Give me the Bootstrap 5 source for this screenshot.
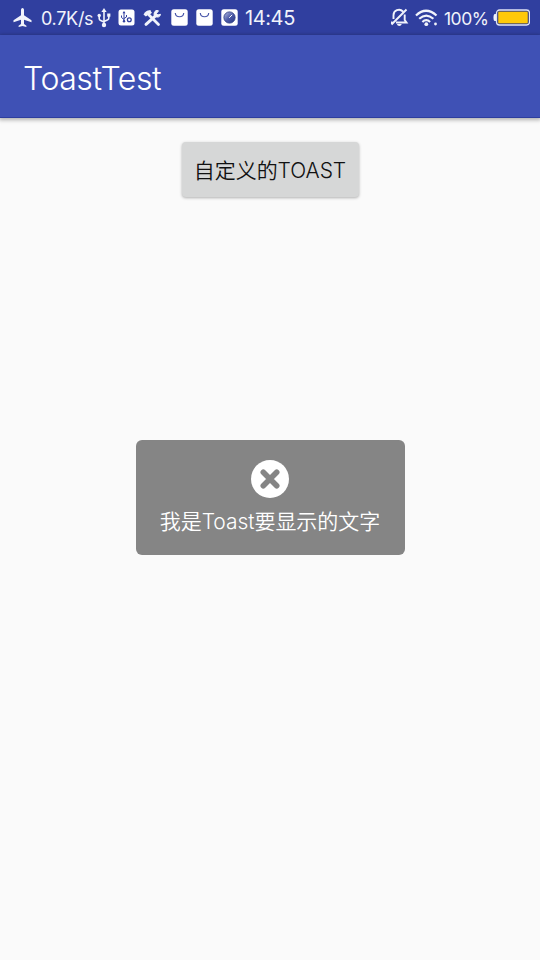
<!DOCTYPE html>
<html lang="zh-CN">
<head>
<meta charset="utf-8">
<meta name="viewport" content="width=device-width, initial-scale=1">
<title>ToastTest</title>
<link href="https://cdn.jsdelivr.net/npm/bootstrap@5.3.0/dist/css/bootstrap.min.css" rel="stylesheet">
<style>
  body { background: #fafafa; font-family: Inter, "Noto Sans CJK SC", sans-serif; }
  .status-bar { height: 35px; background: #303f9f; color: #f1f3fb; padding: 0 10px 0 13px; line-height: 35px; }
  .status-bar svg { display: block; flex: none; }
  .status-bar span { white-space: nowrap; flex: none; padding-top: 2px; }
  .status-bar .speed { width: 56px; margin-left: 8px; padding-left: 1px; font-size: 18px; letter-spacing: -.3px; }
  .status-bar .clock { margin-left: 7px; font-size: 20px; letter-spacing: -.4px; }
  .status-bar .level { width: 49px; margin-left: 5px; font-size: 17.5px; letter-spacing: -.5px; }
  .app-bar { height: 83px; background: #3f51b5; padding: 4px 23px 0; box-shadow: inset 0 -1px 0 #2d3e9e, 0 1px 4px 1px rgba(0,0,0,.3); }
  .app-title { color: #fff; font-size: 32px; font-weight: 300; line-height: 1; letter-spacing: -.45px; }
  .btn-toast { width: 177px; height: 55px; margin-top: 24px; padding: 2px 0 0; border: 0; border-radius: 4px; background: #d6d7d7; color: #111; font-size: 21px; font-weight: 350; line-height: 1; letter-spacing: -.05px; box-shadow: 0 1px 3px rgba(0,0,0,.3); white-space: nowrap; }
  .toast-box { width: 269px; height: 115px; margin-top: 243px; padding-top: 20px; border-radius: 6px; background: #858585; color: #fff; }
  .toast-text { margin-top: 9px; font-size: 21px; font-weight: 350; line-height: 30px; letter-spacing: -.05px; white-space: nowrap; }
</style>
</head>
<body>
<div class="status-bar d-flex align-items-center">
  <svg width="19" height="20" viewBox="0 0 19 20" fill="#f1f3fb"><path d="M9.500 0c1 0 1.500 1 1.500 2.200v5l7.500 5v2l-7.500-2.500v4.300l2.400 1.800v1.300l-3.900-1-3.900 1v-1.300L8 16v-4.300L.5 14.200v-2l7.500-5v-5C8 1 8.500 0 9.500 0z"/></svg>
  <span class="speed">0.7K/s</span>
  <svg style="margin-left:1px" width="14" height="20" viewBox="0 0 14 20" fill="none" stroke="#f1f3fb" stroke-width="1.600"><path d="M7 3v13M2.200 8v2.500q0 1.500 1.500 2L7 14M11.800 7.500V10q0 1.500-1.500 2L7 13.500"/><path d="M7 0l2.600 4H4.400z" fill="#f1f3fb" stroke="none"/><circle cx="7" cy="17" r="2.200" fill="#f1f3fb" stroke="none"/><circle cx="2.200" cy="7.500" r="1.700" fill="#f1f3fb" stroke="none"/><path d="M10.200 5.500h3.200v3.200h-3.200z" fill="#f1f3fb" stroke="none"/></svg>
  <svg style="margin-left:7px" width="17" height="17" viewBox="0 0 17 17"><rect x=".5" y=".5" width="16" height="16" rx="2.500" fill="#fff"/><g fill="none" stroke="#303f9f"><path d="M6 3.500v8.500M3.500 6.500v2L6 10.500M8.500 6v2L6 9.500"/><circle cx="11.300" cy="10.800" r="1.900" stroke-width="1.300"/></g><circle cx="6" cy="12.300" r="1.200" fill="#303f9f"/><path d="M6 2l1.500 2.300h-3z" fill="#303f9f"/></svg>
  <svg style="margin-left:8px" width="19" height="18" viewBox="0 0 19 18" fill="none" stroke="#f1f3fb"><path d="M6 6l9.500 9.500" stroke-width="2.800" stroke-linecap="round"/><path d="M.5 5.500q3-5 7.500-4L4.500 6.500 2.800 7.500z" fill="#f1f3fb" stroke="none"/><path d="M4.500 5.500L8 2.500" stroke-width="3"/><path d="M3 15.300L12.500 6.800" stroke-width="3" stroke-linecap="round"/><path d="M15.500 1.800a3.200 3.200 0 1 0 2 3.500L14.800 6 13.500 4.500z" fill="#f1f3fb" stroke-width="1"/></svg>
  <svg style="margin-left:9px" width="17" height="17" viewBox="0 0 17 17"><rect x=".3" y=".3" width="16.400" height="16.400" rx="2.500" fill="#fff"/><path d="M4.300 4c.4 5 8 5 8.400 0" fill="none" stroke="#4a58aa" stroke-width="1.200"/></svg>
  <svg style="margin-left:8px" width="17" height="17" viewBox="0 0 17 17"><rect x=".3" y=".3" width="16.400" height="16.400" rx="2.500" fill="#fff"/><path d="M4.300 4c.4 5 8 5 8.400 0" fill="none" stroke="#4a58aa" stroke-width="1.200"/></svg>
  <svg style="margin-left:8px" width="17" height="17" viewBox="0 0 17 17"><defs><linearGradient id="lens" x1="0" y1="0" x2="1" y2="1"><stop offset="0" stop-color="#b8c0e4"/><stop offset=".5" stop-color="#4d5ba8"/><stop offset="1" stop-color="#263582"/></linearGradient></defs><rect x=".3" y=".3" width="16.400" height="16.400" rx="2.500" fill="#fff"/><circle cx="8.500" cy="8.500" r="5.600" fill="url(#lens)" stroke="#303f87" stroke-width=".9"/><path d="M8.200 8.800l3-3" stroke="#fff" stroke-width="1"/></svg>
  <span class="clock">14:45</span>
  <svg class="ms-auto" width="19" height="19" viewBox="0 0 19 19" fill="none" stroke="#f1f3fb" stroke-width="1.900"><path d="M3.500 11V7.500a5.500 5.500 0 0 1 9.500-4M14.700 6.500V12l1.800 2.500H6M1.500 16.500L16.500 1.500M1 14.500h1.500"/><path d="M6.800 16h5q-.7 2-2.500 2t-2.500-2z" fill="#f1f3fb" stroke="none"/></svg>
  <svg style="margin-left:6px" width="24" height="18" viewBox="0 0 24 18" fill="none" stroke="#f1f3fb" stroke-width="2.200"><path d="M1 6.500q10-9.500 20.500 0M4.200 9.800q7-6.500 14.200 0M7.400 13q3.800-3.600 7.700 0"/><circle cx="11.300" cy="15.200" r="1.900" fill="#f1f3fb" stroke="none"/><circle cx="20.500" cy="15" r="1.400" fill="#f1f3fb" stroke="none"/></svg>
  <span class="level">100%</span>
  <svg width="37" height="17" viewBox="0 0 37 17"><path d="M3 5H1.800Q.5 5 .5 8.500T1.800 12H3z" fill="#f1f3fb"/><rect x="3.500" y="1" width="33" height="15" rx="3" fill="#303f9f" stroke="#dfe3f5" stroke-width="1.300"/><rect x="5" y="2.500" width="30" height="12" rx="1" fill="#ffc90a" stroke="#665f55" stroke-width=".7"/></svg>
</div>
<header class="app-bar d-flex align-items-center"><h1 class="app-title mb-0">ToastTest</h1></header>
<main class="d-flex flex-column align-items-center">
  <button type="button" class="btn btn-toast">自定义的TOAST</button>
  <div class="toast-box d-flex flex-column align-items-center" role="alert">
    <svg width="38" height="38" viewBox="0 0 38 38"><circle cx="19" cy="19" r="19" fill="#fff"/><path d="M12.300 12.300l13.400 13.400M25.700 12.300L12.300 25.700" stroke="#858585" stroke-width="5.600" stroke-linecap="round"/></svg>
    <div class="toast-text">我是Toast要显示的文字</div>
  </div>
</main>
<script src="https://cdn.jsdelivr.net/npm/bootstrap@5.3.0/dist/js/bootstrap.bundle.min.js"></script>
</body>
</html>
